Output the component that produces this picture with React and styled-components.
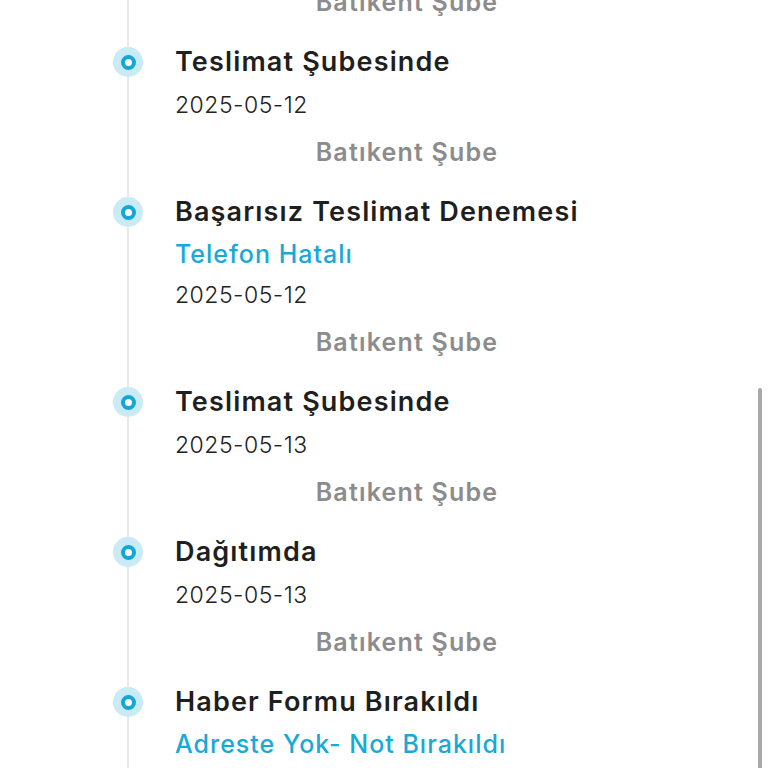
import React from "react";
import styled, { createGlobalStyle } from "styled-components";

const GlobalStyle = createGlobalStyle`
    html, body {
        margin: 0;
        padding: 0;
        background: #ffffff;
        font-family: "Inter", "Noto Sans", sans-serif;
        overflow: hidden;
    }
`

const Page = styled.div`
    position: relative;
    width: 768px;
    height: 768px;
    overflow: hidden;
    background: #ffffff;
`

// the list is scrolled a little, so the previous entry peeks in at the top
const Timeline = styled.ul`
    list-style: none;
    margin: -110px 0 0 0;
    padding: 0 129px 0 113px;
`

const Item = styled.li`
    display: grid;
    grid-template-columns: 30px 1fr;
    column-gap: 32px;
    padding-bottom: 16px;
`

const Rail = styled.div`
    background: linear-gradient(#e9e9e9, #e9e9e9) no-repeat center / 2px 100%;
    margin-bottom: -16px;
`

const Dot = styled.div`
    width: 30px;
    height: 30px;
    margin-top: 7px;
    border-radius: 50%;
    background: #c9ebf6;
    display: flex;
    align-items: center;
    justify-content: center;

    &::after {
        content: "";
        width: 7px;
        height: 7px;
        border-radius: 50%;
        border: 4px solid #12a7d6;
        background: #ffffff;
    }
`

const Body = styled.div`
    display: flex;
    flex-direction: column;
    white-space: nowrap;
`

const Title = styled.div`
    font-size: 27px;
    font-weight: 600;
    line-height: 44px;
    color: #1f1f1f;
    letter-spacing: 1.15px;
`

const Note = styled.div`
    font-size: 25px;
    font-weight: 500;
    line-height: 40px;
    color: #17a9d8;
    letter-spacing: 1px;
`

const Day = styled.div`
    font-size: 23px;
    font-weight: 300;
    line-height: 42px;
    color: #222222;
    letter-spacing: 0.5px;
`

const Branch = styled.div`
    font-size: 25px;
    font-weight: 600;
    line-height: 44px;
    margin-top: 4px;
    color: #8c8c8c;
    text-align: center;
    letter-spacing: 1.2px;
`

const ScrollThumb = styled.div`
    position: absolute;
    top: 388px;
    right: 6px;
    width: 4px;
    height: 400px;
    border-radius: 2px;
    background: #a9a9a9;
`

const events = [
    { title: "Teslimat Şubesinde", date: "2025-05-11", branch: "Batıkent Şube" },
    { title: "Teslimat Şubesinde", date: "2025-05-12", branch: "Batıkent Şube" },
    { title: "Başarısız Teslimat Denemesi", note: "Telefon Hatalı", date: "2025-05-12", branch: "Batıkent Şube" },
    { title: "Teslimat Şubesinde", date: "2025-05-13", branch: "Batıkent Şube" },
    { title: "Dağıtımda", date: "2025-05-13", branch: "Batıkent Şube" },
    { title: "Haber Formu Bırakıldı", note: "Adreste Yok- Not Bırakıldı", date: "2025-05-13", branch: "Batıkent Şube" },
]

const App = () => {
    return (
        <Page>
            <GlobalStyle />
            <Timeline>
                {events.map((event, index) => {
                    return (
                        <Item key={index}>
                            <Rail>
                                <Dot />
                            </Rail>
                            <Body>
                                <Title>{event.title}</Title>
                                {event.note && <Note>{event.note}</Note>}
                                <Day>{event.date}</Day>
                                <Branch>{event.branch}</Branch>
                            </Body>
                        </Item>
                    )
                })}
            </Timeline>
            <ScrollThumb />
        </Page>
    )
}

export default App;
